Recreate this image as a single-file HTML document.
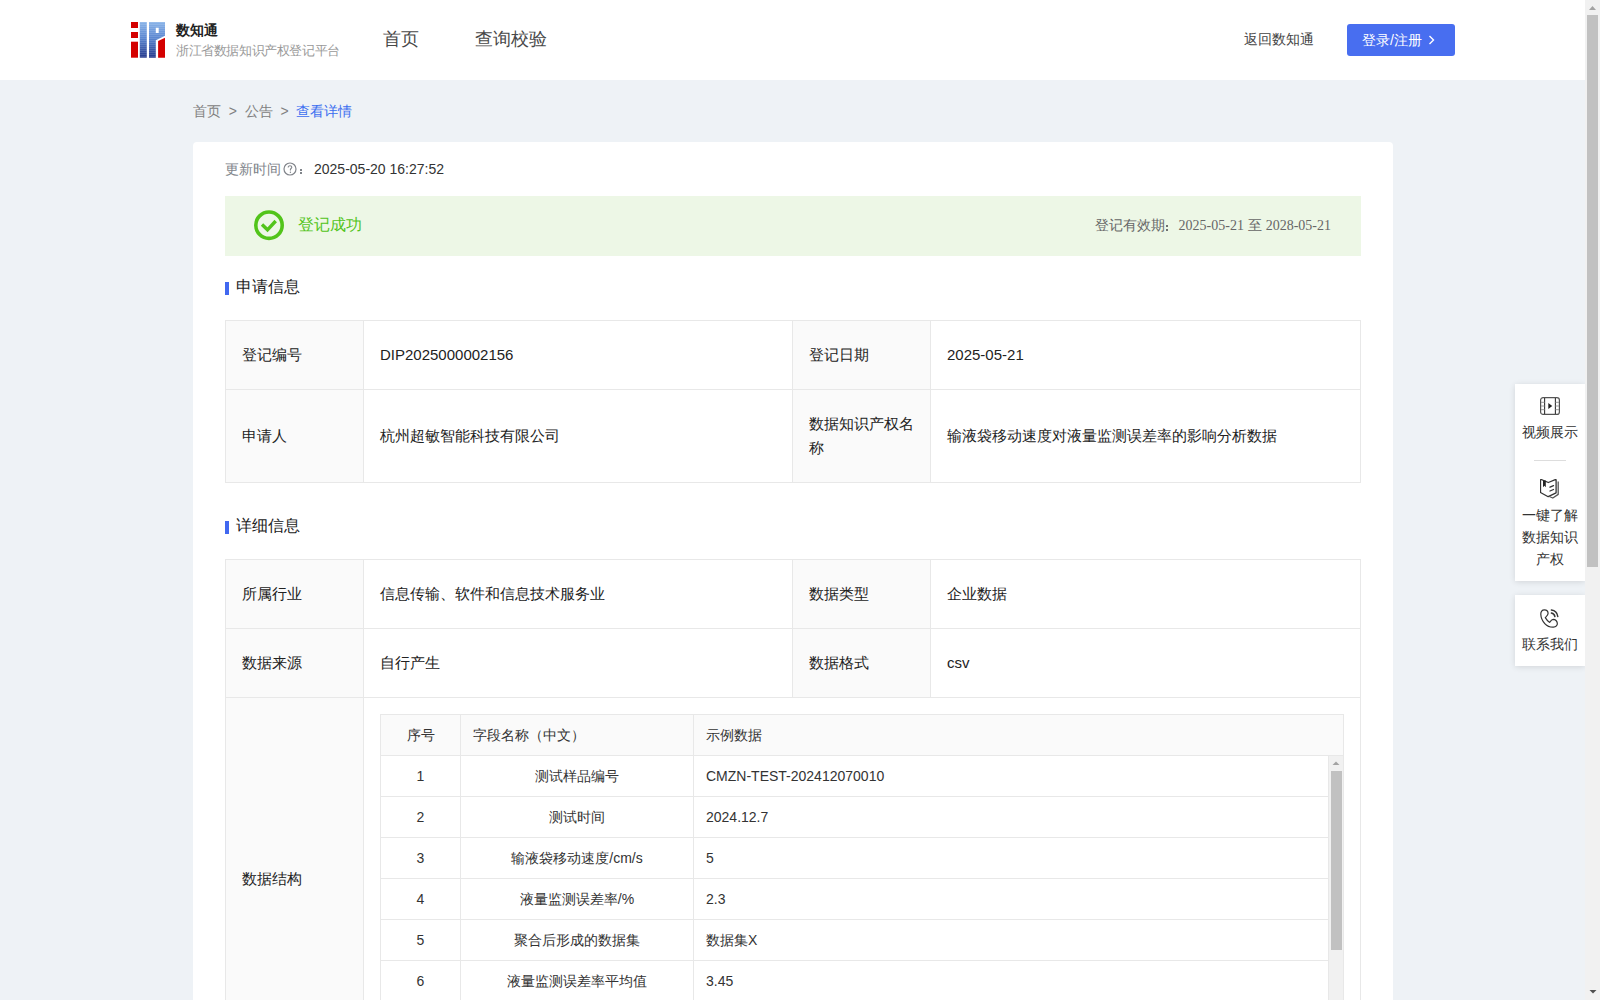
<!DOCTYPE html>
<html><head><meta charset="utf-8">
<style>
*{box-sizing:border-box;margin:0;padding:0}
html,body{width:1600px;height:1000px;overflow:hidden}
body{background:#eef2f6;font-family:"Liberation Sans",sans-serif;color:#333;position:relative}
.hdr{position:absolute;left:0;top:0;width:1585px;height:80px;background:#fff}
.logo{position:absolute;left:131px;top:22px;width:34px;height:36px}
.brand{position:absolute;left:176px;top:21px;font-size:14px;font-weight:bold;color:#222;line-height:18px;white-space:nowrap}
.sub{position:absolute;left:176px;top:42px;font-size:13px;letter-spacing:-0.4px;color:#999;line-height:18px;white-space:nowrap}
.nav{position:absolute;top:28px;font-size:18px;color:#484848;line-height:22px;white-space:nowrap}
.back{position:absolute;left:1244px;top:29px;font-size:14px;color:#444;line-height:20px}
.btn{position:absolute;left:1347px;top:24px;width:108px;height:32px;background:#486ef0;border-radius:3px;color:#fff;font-size:14px;line-height:32px;padding-left:15px;white-space:nowrap}
.btn svg{position:absolute;left:81px;top:11px}
.crumb{position:absolute;left:193px;top:101px;font-size:14px;line-height:20px;color:#808080;white-space:nowrap}
.crumb .cur{color:#3b6ef0}
.card{position:absolute;left:193px;top:142px;width:1200px;height:900px;background:#fff;border-radius:4px}
.upd{position:absolute;left:225px;top:159px;font-size:14px;line-height:20px;color:#80848a;white-space:nowrap}
.upd .v{color:#333;position:absolute;left:89px;top:0}
.upd svg{position:absolute;left:58px;top:3px}
.upd .colon{position:absolute;left:71px;top:0}
.banner{position:absolute;left:225px;top:196px;width:1136px;height:60px;background:#edf7e6}
.banner svg{position:absolute;left:29px;top:14px}
.ok{position:absolute;left:298px;top:214px;font-size:16px;line-height:22px;color:#52c41a}
.valid{position:absolute;right:269px;top:215px;font-size:14px;line-height:20px;color:#666;white-space:nowrap}
.valid .d{font-family:"Liberation Serif",serif}
.sec{position:absolute;left:225px;font-size:16px;line-height:22px;color:#222;padding-left:11px}
.sec:before{content:"";position:absolute;left:0;top:6px;width:4px;height:13px;background:#4168f0}
table{border-collapse:collapse;table-layout:fixed}
.t{position:absolute;left:225px;width:1136px;font-size:15px}
.t td{border:1px solid #e8e8e8;padding:0 16px;line-height:24px;vertical-align:middle;color:#222}
.t td.l{background:#fafafa}
.it{position:absolute;left:380px;top:714px;width:964px;font-size:14px}
.it td{border:1px solid #e8e8e8;height:41px;line-height:20px;color:#333;padding:0 12px}
.it tr.h td{background:#fafafa}
.it td.c{text-align:center}
.sb{position:absolute;background:#f1f1f1}
.thumb{position:absolute;background:#c1c1c1}
.float{position:absolute;left:1515px;width:70px;background:#fff;box-shadow:0 1px 6px rgba(0,0,0,.12);text-align:center;font-size:14px;color:#333;line-height:22px}
.float .it2{position:relative}
.float svg{display:block;margin:0 auto}
</style></head><body>
<div class="hdr"></div>
<svg class="logo" width="34" height="36" viewBox="0 0 34 36">
<defs>
<linearGradient id="bg" x1="0" y1="0" x2="0" y2="1">
<stop offset="0" stop-color="#8ab4e8"/><stop offset="0.45" stop-color="#5a86d0"/><stop offset="1" stop-color="#25398c"/>
</linearGradient>
<pattern id="st" width="2" height="2" patternUnits="userSpaceOnUse"><rect width="2" height="1" fill="rgba(255,255,255,0.12)"/></pattern>
</defs>
<rect x="0" y="0" width="7" height="6" fill="#d40000"/>
<rect x="0" y="10" width="7" height="6" fill="#d40000"/>
<rect x="0" y="19.7" width="7" height="16" fill="#d40000"/>
<rect x="8.8" y="0" width="7" height="35.7" fill="url(#bg)"/>
<path d="M18 0H34V13.7L24.8 18.3V35.7H18Z M24.8 5.7V11.1H27.7V5.7Z" fill="url(#bg)" fill-rule="evenodd"/>
<path d="M27.1 18.9L34 15.8V35.7H27.1Z" fill="#d40000"/>
<rect x="8.8" y="0" width="7" height="35.7" fill="url(#st)"/>
<path d="M18 0H34V13.7L24.8 18.3V35.7H18Z" fill="url(#st)"/>
</svg>
<div class="brand">数知通</div>
<div class="sub">浙江省数据知识产权登记平台</div>
<div class="nav" style="left:383px">首页</div>
<div class="nav" style="left:475px">查询校验</div>
<div class="back">返回数知通</div>
<div class="btn">登录/注册<svg width="7" height="10" viewBox="0 0 7 10"><path d="M1.5 1L5.5 5L1.5 9" fill="none" stroke="#fff" stroke-width="1.4"/></svg></div>

<div class="crumb">首页 &nbsp;&gt;&nbsp; 公告 &nbsp;&gt;&nbsp; <span class="cur">查看详情</span></div>
<div class="card"></div>
<div class="upd">更新时间<svg width="14" height="14" viewBox="0 0 14 14"><circle cx="7" cy="7" r="6" fill="none" stroke="#80848a" stroke-width="1.2"/><path d="M5.2 5.4C5.2 4.3 6 3.8 7 3.8S8.8 4.4 8.8 5.3C8.8 6.4 7.4 6.6 7.4 7.6V8.4" fill="none" stroke="#80848a" stroke-width="1.1"/><circle cx="7.4" cy="10.2" r="0.7" fill="#80848a"/></svg><i style="position:absolute;left:75px;top:10px;width:2px;height:2px;background:#80848a"></i><i style="position:absolute;left:75px;top:13px;width:2px;height:2px;background:#80848a"></i><span class="v">2025-05-20 16:27:52</span></div>
<div class="banner"><svg width="31" height="31" viewBox="0 0 31 31"><circle cx="15" cy="15.2" r="13.2" fill="none" stroke="#52c41a" stroke-width="3.6"/><path d="M8 14.5L13.5 19.8L21.7 11" fill="none" stroke="#52c41a" stroke-width="3.4"/></svg></div>
<div class="ok">登记成功</div>
<div class="valid">登记有效期<span style="display:inline-block;width:14px;height:20px;vertical-align:top;position:relative"><i style="position:absolute;left:1.5px;top:10px;width:2px;height:2px;background:#707070"></i><i style="position:absolute;left:1.5px;top:13.5px;width:2px;height:2px;background:#707070"></i></span><span class="d">2025-05-21</span> 至 <span class="d">2028-05-21</span></div>

<div class="sec" style="top:276px">申请信息</div>
<table class="t" style="top:320px">
<colgroup><col style="width:138px"><col style="width:429px"><col style="width:138px"><col></colgroup>
<tr style="height:69px"><td class="l">登记编号</td><td>DIP2025000002156</td><td class="l">登记日期</td><td>2025-05-21</td></tr>
<tr style="height:93px"><td class="l">申请人</td><td>杭州超敏智能科技有限公司</td><td class="l">数据知识产权名称</td><td>输液袋移动速度对液量监测误差率的影响分析数据</td></tr>
</table>

<div class="sec" style="top:515px">详细信息</div>
<table class="t" style="top:559px">
<colgroup><col style="width:138px"><col style="width:429px"><col style="width:138px"><col></colgroup>
<tr style="height:69px"><td class="l">所属行业</td><td>信息传输、软件和信息技术服务业</td><td class="l">数据类型</td><td>企业数据</td></tr>
<tr style="height:69px"><td class="l">数据来源</td><td>自行产生</td><td class="l">数据格式</td><td>csv</td></tr>
<tr style="height:362px"><td class="l">数据结构</td><td colspan="3"></td></tr>
</table>

<table class="it">
<colgroup><col style="width:80px"><col style="width:233px"><col></colgroup>
<tr class="h"><td class="c">序号</td><td>字段名称（中文）</td><td>示例数据</td></tr>
<tr><td class="c">1</td><td class="c">测试样品编号</td><td>CMZN-TEST-202412070010</td></tr>
<tr><td class="c">2</td><td class="c">测试时间</td><td>2024.12.7</td></tr>
<tr><td class="c">3</td><td class="c">输液袋移动速度/cm/s</td><td>5</td></tr>
<tr><td class="c">4</td><td class="c">液量监测误差率/%</td><td>2.3</td></tr>
<tr><td class="c">5</td><td class="c">聚合后形成的数据集</td><td>数据集X</td></tr>
<tr><td class="c">6</td><td class="c">液量监测误差率平均值</td><td>3.45</td></tr>
<tr><td class="c">7</td><td class="c"></td><td></td></tr>
</table>
<!-- inner scrollbar -->
<div class="sb" style="left:1328px;top:756px;width:15px;height:260px;border-left:1px solid #e8e8e8"></div>
<svg style="position:absolute;left:1331px;top:759px" width="10" height="8" viewBox="0 0 10 8"><path d="M1.5 6H8.5L5 2.5Z" fill="#a3a3a3"/></svg>
<div class="thumb" style="left:1331px;top:771px;width:11px;height:179px"></div>

<!-- float panels -->
<div class="float" style="top:384px;height:197px">
 <svg style="position:absolute;left:25px;top:13px" width="20" height="19" viewBox="0 0 20 19"><rect x="0.6" y="0.6" width="18.8" height="16.8" rx="2.5" fill="none" stroke="#555" stroke-width="1.2"/><path d="M4.6 1V17M15.4 1V17" stroke="#333" stroke-width="1.1"/><path d="M1 5.3H4.5M1 9H4.5M1 12.7H4.5M15.5 5.3H19M15.5 9H19M15.5 12.7H19" stroke="#999" stroke-width="1"/><path d="M8.3 6L12.3 9L8.3 12Z" fill="#222"/></svg>
 <div style="position:absolute;left:0;top:37px;width:70px">视频展示</div>
 <div style="position:absolute;left:19px;top:76px;width:32px;height:1px;background:#ddd"></div>
 <svg style="position:absolute;left:25px;top:95px" width="20" height="20" viewBox="0 0 20 20"><path d="M8.3 3.5L1.2 0.5Q0.5 0.5 0.5 1.3V13.5L8.2 17.7L16.1 13.8V1Q16 0.3 15.3 0.6Z" fill="none" stroke="#333" stroke-width="1.3" stroke-linejoin="round"/><path d="M18.2 2.6V15.4L12.8 19L9.3 17.5" fill="none" stroke="#555" stroke-width="1.3" stroke-linejoin="round"/><path d="M3 1.4H5.8V8.3L4.4 6.8L3 8.3Z" fill="#222"/><path d="M10 8.2L13.5 6.6M10 12L13.5 10.5" stroke="#333" stroke-width="1.3" stroke-linecap="round"/></svg>
 <div style="position:absolute;left:0;top:120px;width:70px;line-height:22px">一键了解<br>数据知识<br>产权</div>
</div>
<div class="float" style="top:595px;height:71px">
 <svg style="position:absolute;left:25px;top:14px" width="20" height="20" viewBox="0 0 20 20"><path d="M4.4 0.8C2 0.8 0.7 2.6 0.8 5.2C0.9 8.5 2.6 12.2 5 14.9C7.3 17.4 10.4 18.3 13.4 18.2C16 18.1 17.6 16.2 17.3 14.2C17 12.2 15.2 10.5 13.2 10.4C11.6 10.4 10.5 12.2 9.5 13.4C8 12.2 6.3 10.3 5.3 8.6C6.6 7.4 8.2 6.3 8.1 4.3C8 2.3 6.4 0.8 4.4 0.8Z" fill="none" stroke="#333" stroke-width="1.2" stroke-linejoin="round"/><path d="M11.4 4.1C13.2 4.5 14.6 5.9 14.9 7.6M11.4 1.1C14.7 1.5 17.3 4.2 17.8 7.5" fill="none" stroke="#333" stroke-width="1.5" stroke-linecap="round"/></svg>
 <div style="position:absolute;left:0;top:38px;width:70px">联系我们</div>
</div>

<!-- page scrollbar -->
<div class="sb" style="left:1585px;top:0;width:15px;height:1000px"></div>
<svg style="position:absolute;left:1588px;top:4px" width="10" height="8" viewBox="0 0 10 8"><path d="M1 6H8L4.5 2Z" fill="#a3a3a3"/></svg>
<div class="thumb" style="left:1587px;top:15px;width:11px;height:552px"></div>
<svg style="position:absolute;left:1588px;top:988px" width="10" height="8" viewBox="0 0 10 8"><path d="M1.5 2H8.5L5 5.5Z" fill="#505050"/></svg>
</body></html>
